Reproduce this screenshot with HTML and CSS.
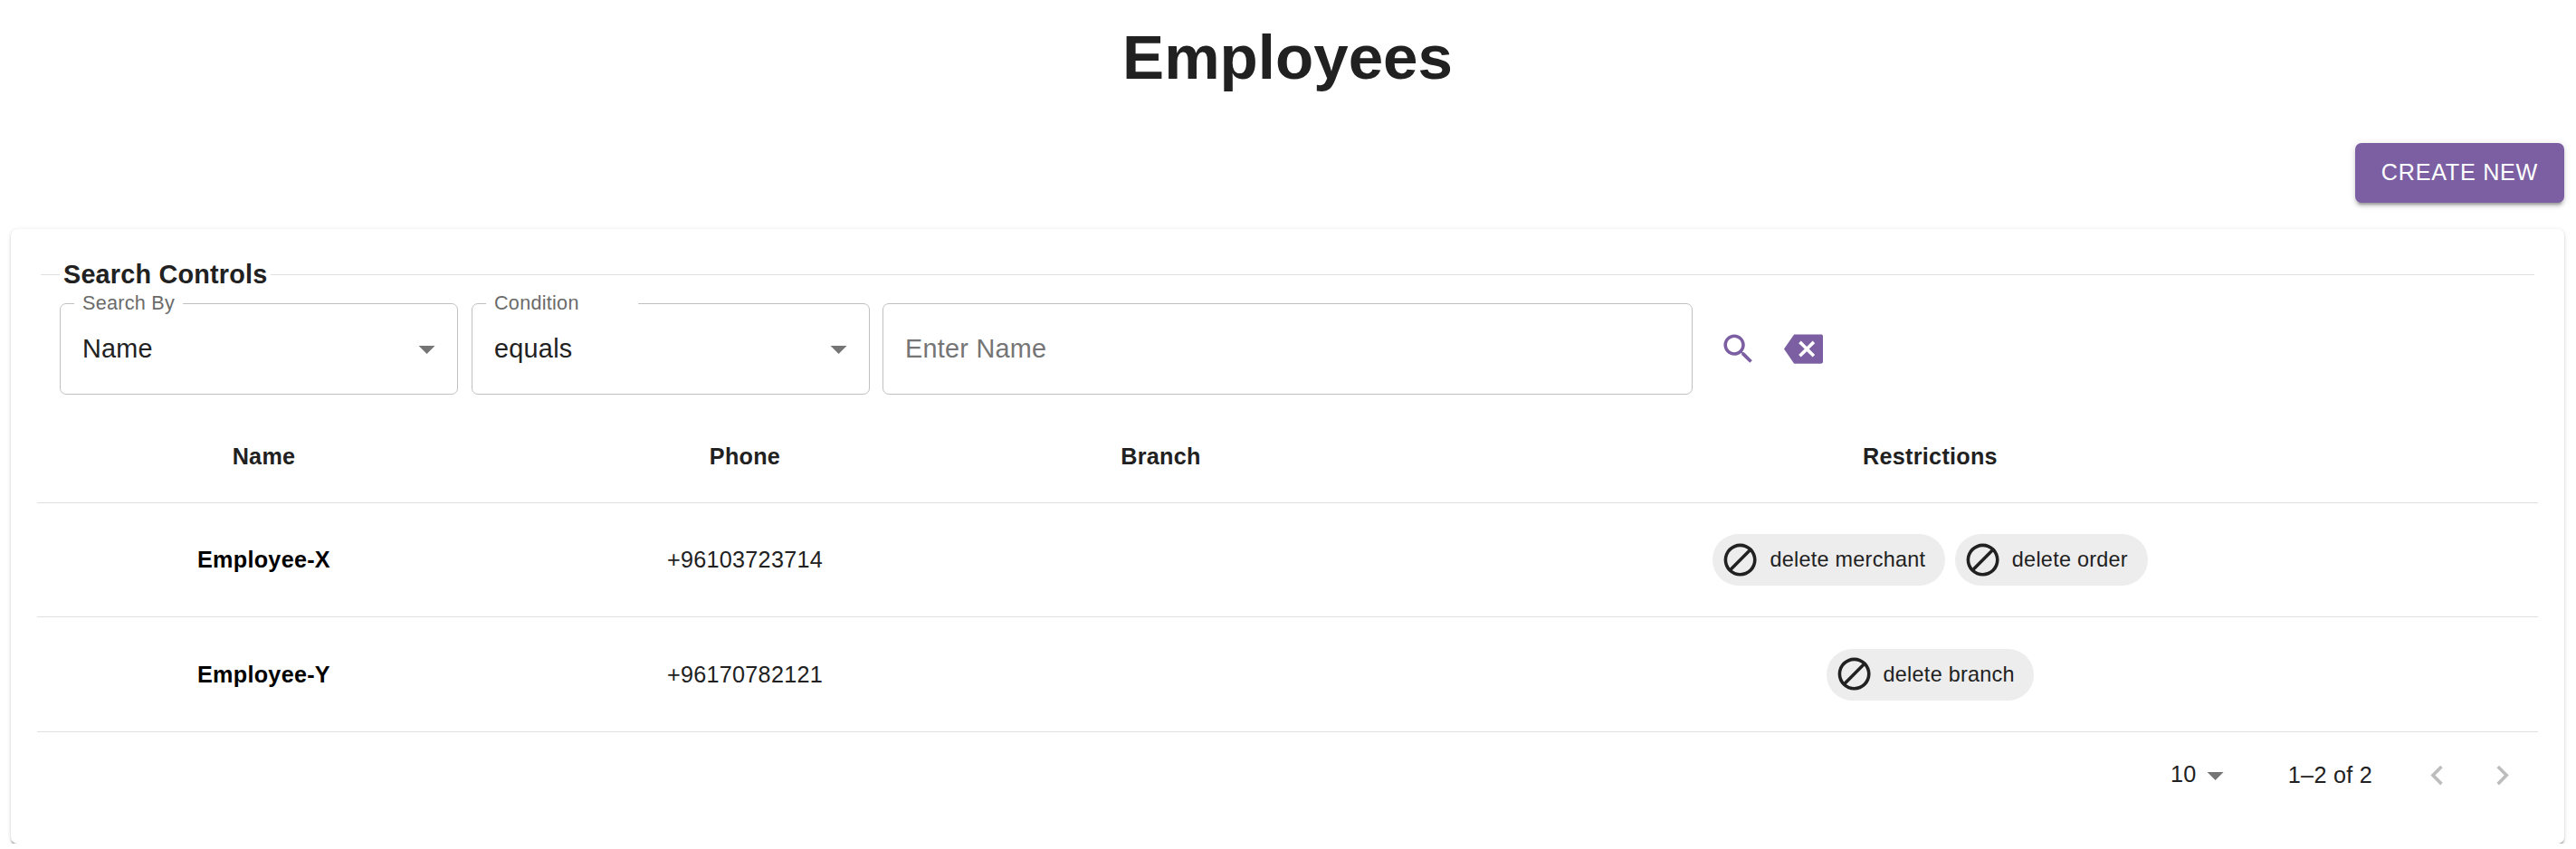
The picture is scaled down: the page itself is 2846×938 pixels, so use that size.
FILE: index.html
```html
<!DOCTYPE html>
<html lang="en">
<head>
<meta charset="utf-8">
<title>Employees</title>
<link rel="stylesheet" href="styles.css">
</head>
<body>
<svg width="0" height="0" class="sprite" aria-hidden="true">
  <symbol id="arrow" viewBox="0 0 24 24"><path d="M7 10l5 5 5-5z"/></symbol>
  <symbol id="search" viewBox="0 0 24 24"><path d="M15.5 14h-.79l-.28-.27C15.41 12.59 16 11.11 16 9.5 16 5.91 13.09 3 9.5 3S3 5.91 3 9.5 5.91 16 9.5 16c1.61 0 3.09-.59 4.23-1.57l.27.28v.79l5 4.99L20.49 19l-4.99-5zm-6 0C7.01 14 5 11.99 5 9.5S7.01 5 9.5 5 14 7.01 14 9.5 11.99 14 9.5 14z"/></symbol>
  <symbol id="backspace" viewBox="0 0 24 24"><path d="M22.700 3H6.200L0 12l6.200 9h16.500c.7 0 1.300-.6 1.300-1.300V4.300c0-.7-.6-1.300-1.300-1.300zM19 15.590L17.590 17 14 13.410 10.410 17 9 15.590 12.590 12 9 8.410 10.410 7 14 10.590 17.590 7 19 8.410 15.410 12 19 15.590z"/></symbol>
  <symbol id="blocked" viewBox="0 0 24 24"><path fill-rule="evenodd" d="M12 2a10 10 0 1 0 0 20 10 10 0 0 0 0-20zM4 12c0-4.4 3.6-8 8-8 1.8 0 3.500.6 4.900 1.700L5.700 16.900C4.600 15.500 4 13.800 4 12zm8 8c-1.800 0-3.500-.6-4.900-1.700L18.300 7.100C19.400 8.500 20 10.200 20 12c0 4.400-3.600 8-8 8z"/></symbol>
  <symbol id="left" viewBox="0 0 24 24"><path d="M15.41 7.41L14 6l-6 6 6 6 1.41-1.41L10.83 12z"/></symbol>
  <symbol id="right" viewBox="0 0 24 24"><path d="M10 6L8.59 7.41 13.17 12l-4.58 4.59L10 18l6-6z"/></symbol>
</svg>
<main class="page">
  <h1 class="title">Employees</h1>
  <div class="actions"><button class="create">CREATE NEW</button></div>
  <section class="card">
    <h2 class="legend">Search Controls</h2>
    <div class="controls">
      <fieldset class="field select">
        <legend class="label label-search">Search By</legend>
        <div class="value"><span>Name</span><svg class="icon arrow"><use href="#arrow"/></svg></div>
      </fieldset>
      <fieldset class="field select">
        <legend class="label label-condition">Condition</legend>
        <div class="value"><span>equals</span><svg class="icon arrow"><use href="#arrow"/></svg></div>
      </fieldset>
      <div class="field query">Enter Name</div>
      <div class="tools">
        <svg class="icon"><use href="#search"/></svg>
        <svg class="icon"><use href="#backspace"/></svg>
      </div>
    </div>
    <div class="table">
      <div class="row head"><div>Name</div><div>Phone</div><div>Branch</div><div>Restrictions</div></div>
      <div class="row first">
        <div class="name">Employee-X</div><div>+96103723714</div><div></div>
        <div class="chips">
          <span class="chip"><svg class="icon"><use href="#blocked"/></svg>delete merchant</span>
          <span class="chip"><svg class="icon"><use href="#blocked"/></svg>delete order</span>
        </div>
      </div>
      <div class="row">
        <div class="name">Employee-Y</div><div>+96170782121</div><div></div>
        <div class="chips">
          <span class="chip"><svg class="icon"><use href="#blocked"/></svg>delete branch</span>
        </div>
      </div>
    </div>
    <div class="pagination">
      <span class="size">10</span><svg class="icon arrow"><use href="#arrow"/></svg>
      <span class="range">1–2 of 2</span>
      <svg class="icon nav"><use href="#left"/></svg>
      <svg class="icon nav"><use href="#right"/></svg>
    </div>
  </section>
</main>
</body>
</html>
```
FILE: styles.css
```css
* { box-sizing: border-box; }

body {
  margin: 0;
  background: #fff;
  color: #212121;
  font-family: "Liberation Sans", Arial, sans-serif;
  font-size: 25.2px;
  letter-spacing: 0.27px;
}

.sprite { position: absolute; }

.icon {
  display: block;
  flex: none;
  width: 43.2px;
  height: 43.2px;
  fill: currentColor;
}

.page { padding: 0 13px 0 12px; }

.title {
  margin: 0;
  height: 126px;
  line-height: 127px;
  font-size: 69.12px;
  letter-spacing: 0;
  text-align: center;
}

.actions {
  display: flex;
  justify-content: flex-end;
  padding: 32px 0 29px;
}

.create {
  width: 231px;
  height: 66px;
  padding: 0 0 1px;
  border: 0;
  border-radius: 7px;
  background: #7b5fa2;
  color: #fff;
  font: inherit;
  letter-spacing: 0.72px;
  box-shadow: 0 5.4px 1.8px -3.6px rgba(0, 0, 0, 0.2), 0 3.6px 3.6px rgba(0, 0, 0, 0.14), 0 1.8px 9px rgba(0, 0, 0, 0.12);
}

.card {
  height: 679px;
  padding: 34px 29px 0;
  border-radius: 7px;
  background: #fff;
  box-shadow: 0 3.6px 1.8px -1.8px rgba(0, 0, 0, 0.2), 0 1.8px 1.8px rgba(0, 0, 0, 0.14), 0 1.8px 5.4px rgba(0, 0, 0, 0.12);
}

.legend {
  display: flex;
  align-items: center;
  gap: 4px;
  height: 33px;
  margin: 0 4px;
  font-size: 28.8px;
  letter-spacing: 0.2px;
}

.legend::before,
.legend::after {
  content: "";
  height: 1px;
  background: #e0e0e0;
}

.legend::before { width: 21px; }
.legend::after { flex: 1; }

.controls {
  display: flex;
  align-items: flex-end;
  height: 116px;
  padding-left: 25px;
  font-size: 28.8px;
}

.field {
  margin: 0;
  border: 1px solid #c0c0c0;
  border-radius: 7px;
}

.select {
  width: 440px;
  height: 114px;
  margin-right: 15px;
  padding: 0;
}

.select + .select { margin-right: 14px; }

.label {
  height: 26px;
  margin-left: 15px;
  padding: 0 9px;
  color: #6b6b6b;
  font-size: 21.6px;
  line-height: 25px;
  white-space: nowrap;
}

.label-search { width: 120px; }
.label-condition { width: 168px; }

.value {
  display: flex;
  align-items: center;
  justify-content: space-between;
  height: 75px;
  padding: 0 12px 0 24px;
}

.arrow { color: #757575; }

.query {
  width: 895px;
  height: 101px;
  padding-left: 24px;
  line-height: 98px;
  color: #757575;
}

.tools {
  display: flex;
  align-items: center;
  gap: 29px;
  height: 101px;
  padding-left: 29px;
  color: #7b5fa2;
}

.row {
  display: grid;
  grid-template-columns: 501px 562px 357px 1fr;
  align-items: center;
  height: 127px;
  border-bottom: 1px solid #e0e0e0;
  text-align: center;
}

.head {
  height: 120px;
  padding-top: 18px;
  font-weight: bold;
}

.first { height: 126px; }

.name {
  color: #000;
  font-weight: bold;
}

.chips {
  display: flex;
  justify-content: center;
  gap: 11px;
}

.chip {
  display: flex;
  align-items: center;
  height: 57px;
  padding: 0 21.6px 0 9px;
  border-radius: 29px;
  background: #ededed;
  font-size: 23.4px;
}

.chip .icon { margin-right: 10.8px; }

.pagination {
  display: flex;
  align-items: center;
  justify-content: flex-end;
  height: 95px;
  padding-right: 18px;
}

.pagination .arrow {
  margin: 0 59px 0 -1px;
}

.size { padding-bottom: 2px; }
.range { padding-right: 21px; }

.nav {
  margin-left: 28.8px;
  color: #bdbdbd;
}
```
